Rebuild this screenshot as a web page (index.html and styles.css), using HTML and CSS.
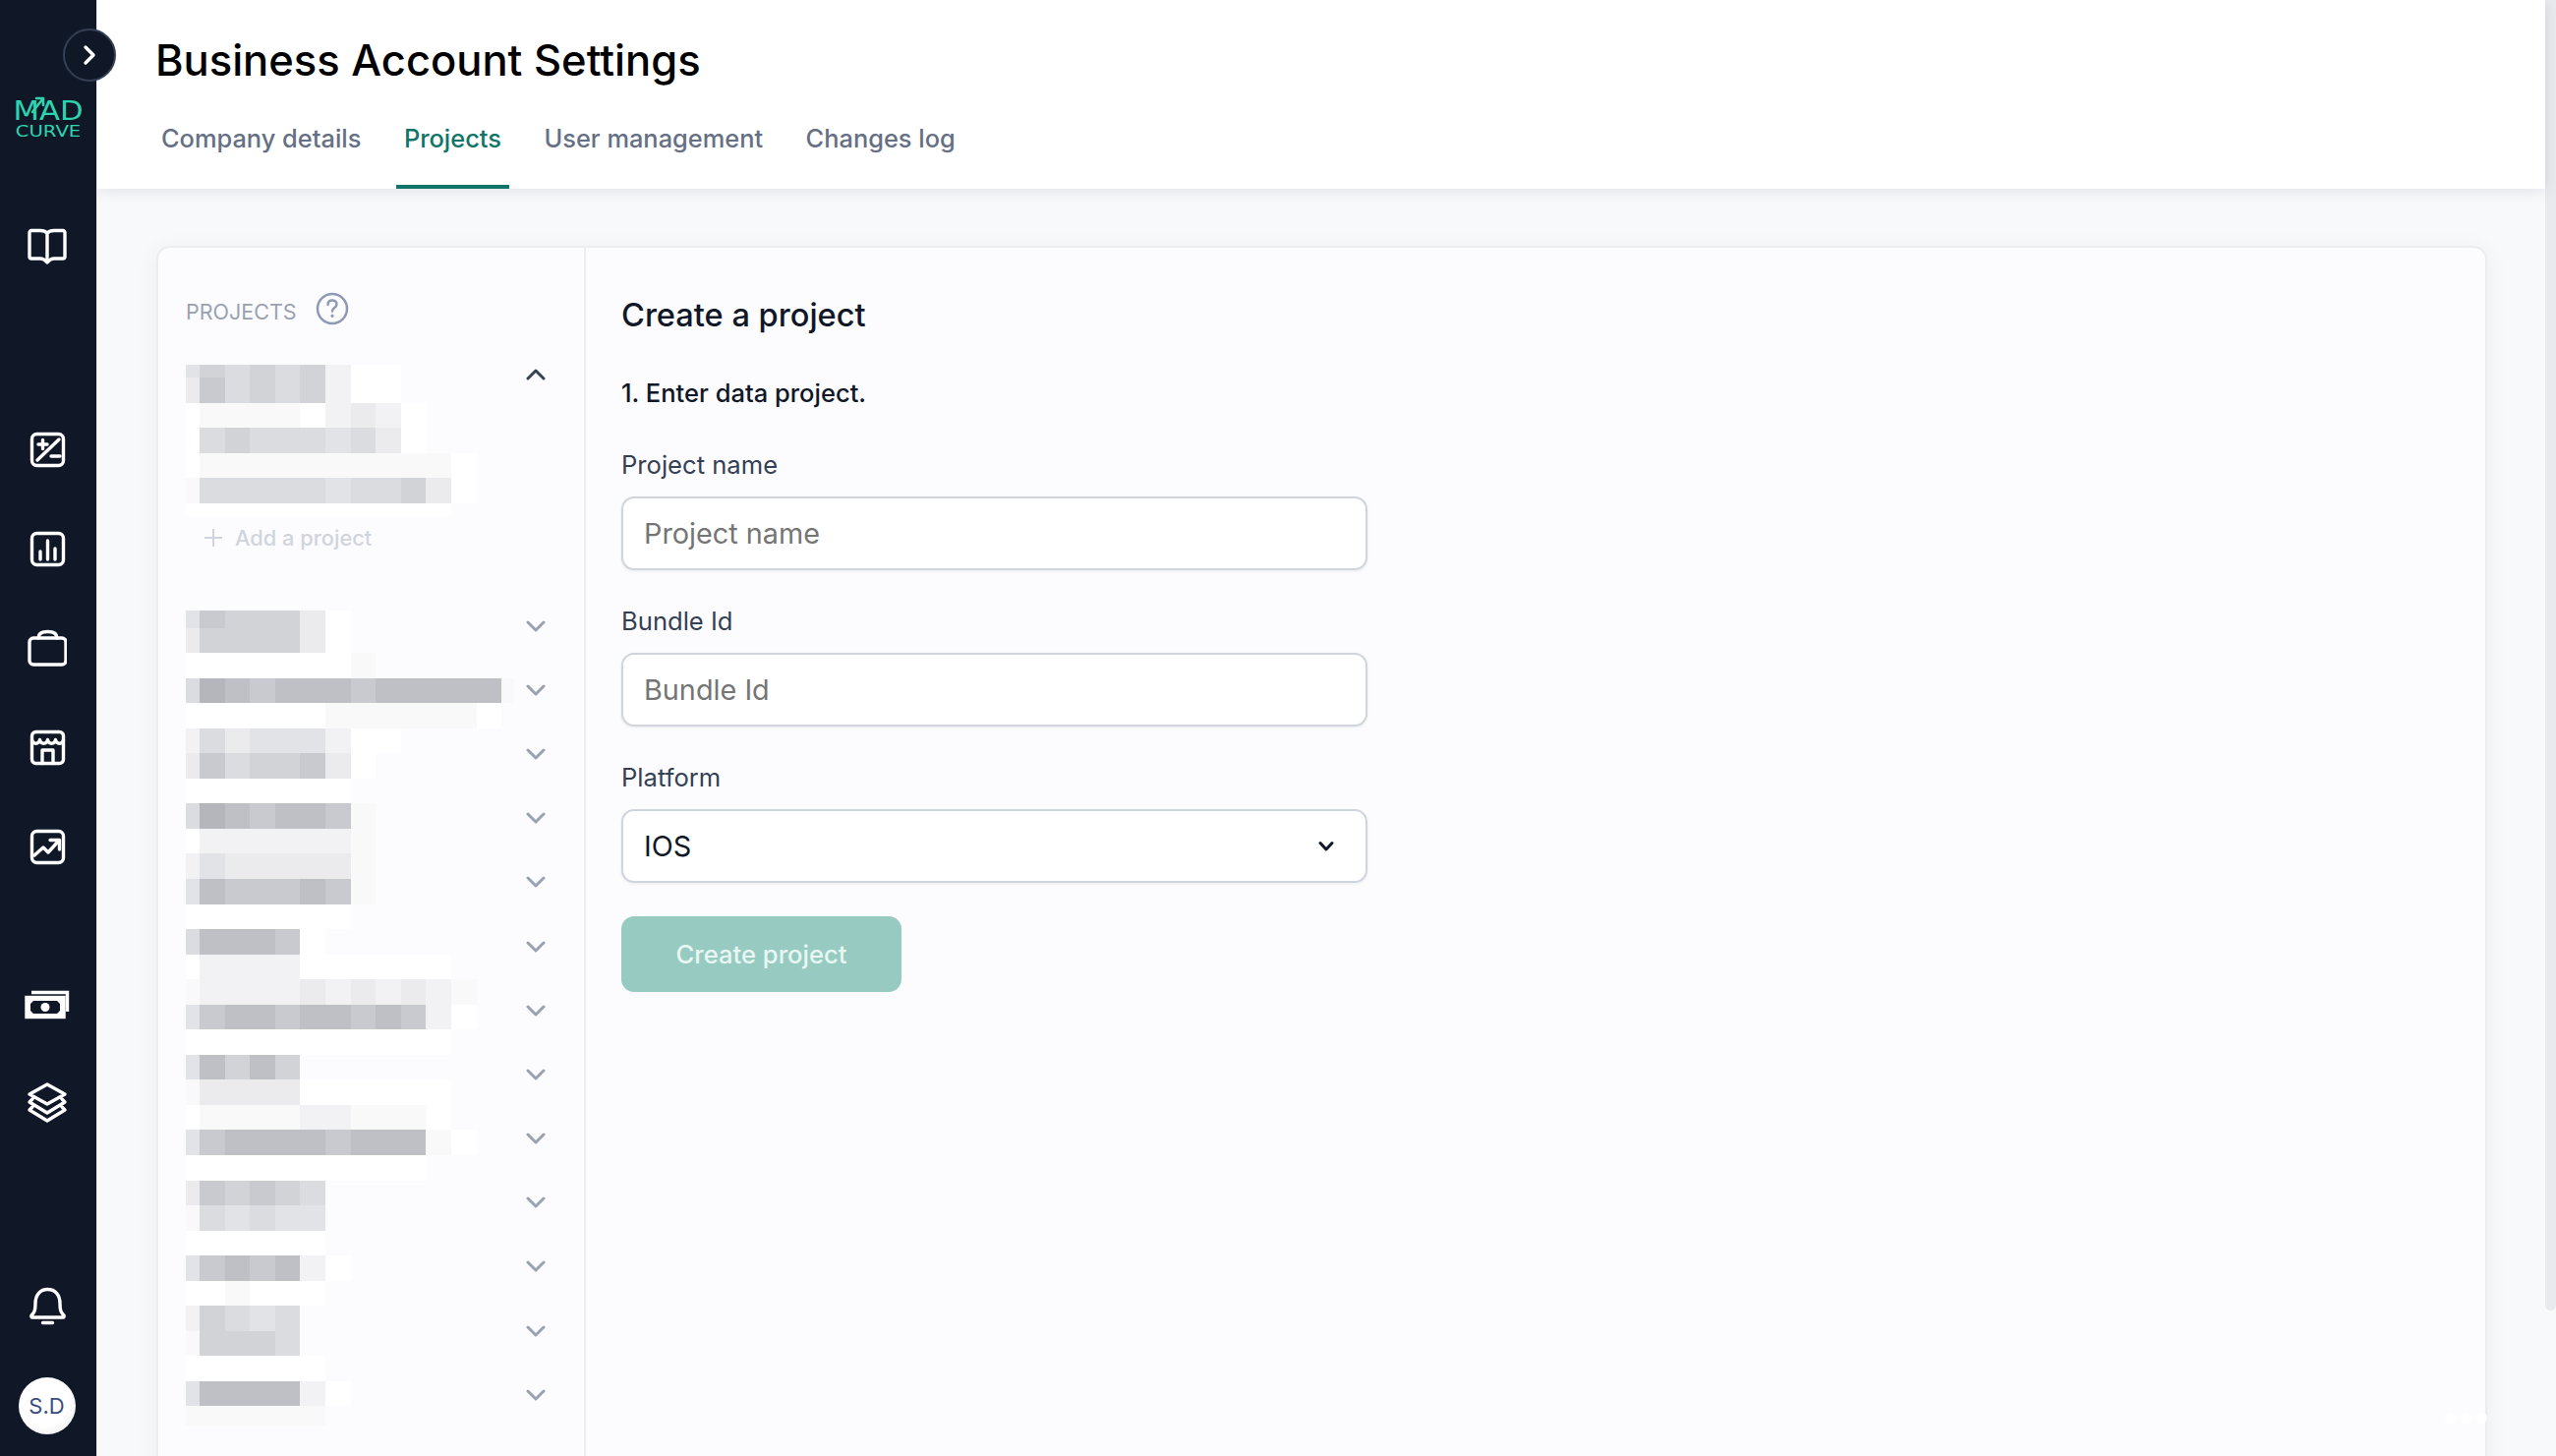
FILE: index.html
```html
<!DOCTYPE html>
<html lang="en">
<head>
  <meta charset="UTF-8">
  <meta name="viewport" content="width=device-width, initial-scale=1.0">
  <title>Business Account Settings</title>
  <link rel="stylesheet" href="styles.css">
</head>
<body>
  <aside class="sidebar">
    <button class="toggle">
      <svg width="14" height="22" viewBox="0 0 14 22"><path d="M3 3l8 8-8 8"/></svg>
    </button>
    <div class="logo">
      <svg class="logo-arrow" width="16" height="18" viewBox="0 0 16 18"><path d="M2 16L13 2M6 2h7v7"/></svg>
      <div class="logo-mad">MAD</div>
      <div class="logo-curve">CURVE</div>
    </div>

    <nav class="nav nav-top">
      <a class="nav-item">
        <svg width="40" height="40" viewBox="0 0 40 40"><path d="M20 7C18 5 16 4.500 13 4.500H4a2 2 0 0 0-2 2V31a2 2 0 0 0 2 2h9c3 0 5 1.500 7 4 2-2.500 4-4 7-4h9a2 2 0 0 0 2-2V6.500a2 2 0 0 0-2-2h-9C24 4.500 22 5 20 7zV37"/></svg>
      </a>
    </nav>

    <nav class="nav nav-reports">
      <a class="nav-item">
        <svg width="40" height="40" viewBox="0 0 40 40"><rect x="4.500" y="4.500" width="32" height="32" rx="5"/><path d="M10 31L32 10M11 15h9M15.500 10.500v9M24 27h9"/></svg>
      </a>
      <a class="nav-item">
        <svg width="40" height="40" viewBox="0 0 40 40"><rect x="4.500" y="4.500" width="32" height="32" rx="5"/><path d="M13 23v8M20.500 12v19M28 20v11"/></svg>
      </a>
      <a class="nav-item">
        <svg width="40" height="40" viewBox="0 0 40 40"><rect x="2" y="10" width="37" height="27" rx="4"/><path d="M11 10C11 5.500 14.500 3.500 20.500 3.500S30 5.500 30 10"/></svg>
      </a>
      <a class="nav-item">
        <svg width="40" height="40" viewBox="0 0 40 40"><rect x="4.500" y="4.500" width="32" height="32" rx="4"/><path d="M4.500 12.500c1 5 7 5 8 0 1 5 7 5 8 0 1 5 7 5 8 0 1 5 7 5 8 0M15 36.500V23h11v13.500"/></svg>
      </a>
      <a class="nav-item">
        <svg width="40" height="40" viewBox="0 0 40 40"><rect x="4.500" y="4.500" width="32" height="32" rx="5"/><path d="M7 29l9-8 5 5 11-12M23 13.500h9.500V23"/></svg>
      </a>
    </nav>

    <nav class="nav nav-money">
      <a class="nav-item">
        <svg width="46" height="30" viewBox="0 0 46 30"><path class="square" d="M7 2.500h36.500V22"/><rect class="square" x="2" y="7.500" width="38" height="20"/><path class="fill" d="M2 6h38v23H2zM9 11l-3 3v7l3 3h24l3-3v-7l-3-3z" fill-rule="evenodd"/><circle class="fill" cx="21" cy="17.500" r="4.500"/></svg>
      </a>
      <a class="nav-item">
        <svg width="42" height="42" viewBox="0 0 42 42"><path d="M21 2l18 10-18 10L3 12zM6 17l-3 3 18 11 18-11-3-3M6 25l-3 3 18 11 18-11-3-3"/></svg>
      </a>
    </nav>

    <div class="sidebar-foot">
      <a class="nav-item">
        <svg width="40" height="40" viewBox="0 0 40 40"><path d="M4 30c3-3 4-5 4-12C8 9 13 3.500 20.500 3.500S33 9 33 18c0 7 1 9 4 12 .5 1 0 2-1 2H5c-1 0-1.500-1-1-2zM15.500 37.500h10"/></svg>
      </a>
      <div class="avatar">S.D</div>
    </div>
  </aside>

  <main class="main">
    <header class="header">
      <h1>Business Account Settings</h1>
      <div class="tabs">
        <a class="tab">Company details</a>
        <a class="tab active">Projects</a>
        <a class="tab">User management</a>
        <a class="tab">Changes log</a>
      </div>
    </header>

    <div class="content">
      <section class="card">
        <div class="projects">
          <div class="projects-head">
            <span>PROJECTS</span>
            <svg width="34" height="34" viewBox="0 0 34 34"><circle cx="17" cy="17" r="15"/><path d="M12.500 13c0-3 2-4.500 4.500-4.500s4.500 1.500 4.500 4c0 3.500-4.500 3.500-4.500 7"/><path class="dot" d="M17 24v.5"/></svg>
          </div>

          <div class="project-group">
            <div class="mosaic mosaic-a" id="mosaic_a"></div>
            <div class="chevrons chevrons-open">
              <div class="chevron-slot open"><svg width="20" height="12" viewBox="0 0 20 12"><path d="M2 10l8-8 8 8"/></svg></div>
            </div>
          </div>

          <div class="add-project">
            <svg width="20" height="20" viewBox="0 0 20 20"><path d="M10 1v18M1 10h18"/></svg>
            <span>Add a project</span>
          </div>

          <div class="project-group">
            <div class="mosaic mosaic-b" id="mosaic_b"></div>
            <div class="chevrons" id="chevrons"></div>
          </div>
        </div>

        <form class="form">
          <h2>Create a project</h2>
          <p class="step">1. Enter data project.</p>
          <label class="field-label" for="project_name">Project name</label>
          <input class="field" id="project_name" type="text" placeholder="Project name">
          <label class="field-label" for="bundle_id">Bundle Id</label>
          <input class="field" id="bundle_id" type="text" placeholder="Bundle Id">
          <label class="field-label">Platform</label>
          <div class="field field-select">
            <span>IOS</span>
            <svg width="16" height="12" viewBox="0 0 16 12"><path d="M2 2.500l6 6.500 6-6.500"/></svg>
          </div>
          <button class="submit" type="button">Create project</button>
        </form>

        <div class="dots"><i></i><i></i><i></i></div>
      </section>
    </div>
  </main>

  <div class="scrollbar"><div class="scrollbar-thumb"></div></div>

  <script src="mosaic.js"></script>
</body>
</html>
```

FILE: styles.css
```css
* {
  box-sizing: border-box;
}
html, body {
  height: 100%;
}
body {
  margin: 0;
  display: flex;
  overflow: hidden;
  font-family: Inter, "Noto Sans", sans-serif;
  background: #f8f9fb;
  color: #101828;
}

/* sidebar */
.sidebar {
  position: relative;
  width: 99px;
  flex: none;
  display: flex;
  flex-direction: column;
  align-items: center;
  padding-right: 3px;
  background: #101828;
  border-right: 1px solid #e4e6ec;
  z-index: 3;
}
.sidebar svg {
  fill: none;
  stroke: #fff;
  stroke-width: 3.400;
  stroke-linecap: round;
  stroke-linejoin: round;
}
.toggle {
  position: absolute;
  left: 64px;
  top: 29px;
  width: 54px;
  height: 54px;
  display: flex;
  align-items: center;
  justify-content: center;
  padding: 0;
  border: 2px solid #344054;
  border-radius: 50%;
  background: #101828;
}
.logo {
  position: relative;
  width: 70px;
  margin-top: 100px;
  margin-left: 2px;
  height: 41px;
  color: #2dd4b0;
  text-align: center;
  font-family: "DejaVu Sans", sans-serif;
  line-height: 1;
}
.logo-mad {
  font-size: 26px;
  height: 26px;
  transform: scaleX(1.18);
}
.logo-curve {
  font-size: 16.500px;
  transform: scaleX(1.19);
}
.sidebar .logo-arrow {
  position: absolute;
  left: 17px;
  top: -2px;
  stroke: #2dd4b0;
  stroke-width: 2.500;
}
.nav {
  display: flex;
  flex-direction: column;
  align-items: center;
  gap: 61px;
}
.nav-top {
  margin-top: 89px;
}
.nav-reports {
  margin-top: 167px;
}
.nav-money {
  margin-top: 121px;
  gap: 60px;
}
.nav-item {
  display: flex;
  align-items: center;
  justify-content: center;
  height: 40px;
}
.sidebar .square {
  stroke-linecap: butt;
  stroke-linejoin: miter;
}
.sidebar .fill {
  fill: #fff;
  stroke: none;
}
.sidebar-foot {
  margin-top: auto;
  padding-bottom: 22px;
  display: flex;
  flex-direction: column;
  align-items: center;
  gap: 53px;
}
.avatar {
  width: 58px;
  height: 58px;
  display: flex;
  align-items: center;
  justify-content: center;
  border-radius: 50%;
  background: radial-gradient(circle at 40% 40%, #fff 55%, #e4e4e4 100%);
  color: #3b4d80;
  font-size: 22px;
}

/* header */
.main {
  flex: 1;
  min-width: 0;
  display: flex;
  flex-direction: column;
}
.header {
  height: 192px;
  flex: none;
  padding: 34px 0 0 59px;
  background: #fff;
  box-shadow: 0 2px 14px rgba(16, 24, 40, 0.1);
  position: relative;
  z-index: 2;
}
h1 {
  margin: 0;
  font-size: 43.500px;
  line-height: 54px;
  font-weight: 500;
  color: #000;
}
.tabs {
  display: flex;
  gap: 27.500px;
  margin-top: 25px;
  margin-left: -2px;
}
.tab {
  height: 79px;
  padding: 10px 8px 0;
  font-size: 25.400px;
  line-height: 36px;
  font-weight: 500;
  color: #667085;
}
.tab.active {
  color: #107569;
  border-bottom: 4px solid #107569;
}

/* card */
.content {
  flex: 1;
  min-height: 0;
  padding: 58px 59px 0 60px;
}
.card {
  position: relative;
  display: flex;
  min-height: 1300px;
  background: #fcfcfe;
  border: 2px solid #ebedf0;
  border-radius: 14px;
  box-shadow: 0 4px 24px rgba(16, 24, 40, 0.05);
}
.projects {
  width: 435px;
  flex: none;
  padding: 46px 39px 0 28px;
  border-right: 2px solid #eceef1;
}
.projects-head {
  display: flex;
  align-items: center;
  gap: 19px;
  height: 34px;
  font-size: 21.500px;
  color: #98a2b3;
}
.projects-head span {
  padding-top: 3px;
}
.projects-head svg {
  margin-top: -3px;
  fill: none;
  stroke: #8d9ab3;
  stroke-width: 2.500;
  stroke-linecap: round;
}
.projects-head .dot {
  stroke-width: 3;
}
.project-group {
  display: flex;
  justify-content: space-between;
  margin-top: 39px;
}
.add-project + .project-group {
  margin-top: 61px;
}
.mosaic {
  display: grid;
  grid-template-columns: 14px repeat(12, 25.600px) 13px;
  width: 334px;
}
.mosaic-a {
  grid-template-rows: 13px repeat(5, 25.500px) 14px;
}
.mosaic-b {
  grid-template-rows: 18px repeat(31, 25.550px) 20px;
}
.chevrons {
  margin-top: -16.500px;
}
.chevrons-open {
  margin-top: -23px;
}
.chevron-slot {
  height: 65.200px;
  width: 20px;
  display: flex;
  align-items: center;
}
.chevron-slot svg {
  fill: none;
  stroke: #98a2b3;
  stroke-width: 3;
  stroke-linecap: round;
  stroke-linejoin: round;
}
.chevron-slot.open svg {
  stroke: #344054;
}
.add-project {
  display: flex;
  align-items: center;
  gap: 12px;
  height: 26px;
  margin-top: 8px;
  margin-left: 18px;
  font-size: 21.800px;
  font-weight: 500;
  color: #d0d5dd;
}
.add-project svg {
  stroke: #d0d5dd;
  stroke-width: 2;
}

/* form */
.form {
  flex: 1;
  padding: 46px 0 0 36px;
  display: flex;
  flex-direction: column;
  align-items: flex-start;
}
h2 {
  margin: 0;
  font-size: 32.600px;
  line-height: 44px;
  font-weight: 500;
  color: #101828;
}
.step {
  margin: 40px 0 0;
  font-size: 25.500px;
  line-height: 36px;
  font-weight: 500;
}
.field-label {
  margin-top: 36px;
  font-size: 25.600px;
  line-height: 36px;
  color: #344054;
}
.step + .field-label {
  margin-top: 37px;
}
.field {
  width: 759px;
  height: 75px;
  margin-top: 14px;
  margin-bottom: -2px;
  padding: 0 21px;
  border: 2px solid #d0d5dd;
  border-radius: 13px;
  background: #fff;
  box-shadow: 0 1px 3px rgba(16, 24, 40, 0.08);
  font-family: inherit;
  font-size: 28.800px;
  color: #101828;
}
.field::placeholder {
  color: #757575;
  opacity: 1;
}
.field-select {
  display: flex;
  align-items: center;
  justify-content: space-between;
  padding-right: 32px;
}
.field-select svg {
  fill: none;
  stroke: #101828;
  stroke-width: 3;
  stroke-linecap: round;
  stroke-linejoin: round;
}
.submit {
  width: 285px;
  height: 77px;
  margin-top: 36px;
  border: none;
  border-radius: 13px;
  background: #97cbc1;
  color: #e8f7f3;
  font-family: inherit;
  font-size: 25.600px;
  font-weight: 500;
}
.dots {
  position: absolute;
  right: -2px;
  bottom: 100px;
  display: flex;
  gap: 5px;
}
.dots i {
  width: 11px;
  height: 11px;
  border-radius: 50%;
  background: #fff;
}

/* scrollbar */
.scrollbar {
  width: 11px;
  flex: none;
}
.scrollbar-thumb {
  height: 1333px;
  background: #e9eaee;
  border-bottom-left-radius: 8px;
  border-bottom-right-radius: 8px;
}
```

FILE: mosaic.js
```js
// blurred project names, one digit per square, 0 = nothing, 1 = white ... a = darkest
const tons = {
  "1": "#ffffff", "2": "#f9f9fa", "3": "#f2f2f4", "4": "#ebebee", "5": "#e2e3e6",
  "6": "#dbdce0", "7": "#d2d3d7", "8": "#c9cacf", "9": "#bfc0c5", "a": "#b5b6bb"
};

const nomesA = [
  "57676731100000",
  "48676731100000",
  "12222134310000",
  "16766656410000",
  "12222222222100",
  "26666656674100",
  "11111111111000"
];

const nomesB = [
  "58777410000000",
  "47777410000000",
  "11111112000000",
  "6a989998999992",
  "11111122222210",
  "36455531100000",
  "48677841000000",
  "11111110000000",
  "6a989982000000",
  "13333332000000",
  "35444442000000",
  "59888982000000",
  "11111110000000",
  "69998100000000",
  "13333111111000",
  "23333434343200",
  "58998998983100",
  "11111111111000",
  "59797000000000",
  "24444111111000",
  "12222332221000",
  "58999989992100",
  "11111111110000",
  "48787600000000",
  "26565500000000",
  "11111100000000",
  "58989310000000",
  "11211100000000",
  "37656000000000",
  "27776000000000",
  "11111100000000",
  "59999310000000",
  "22222200000000"
];

function desenharMosaico(id, linhas) {
  const caixa = document.getElementById(id);
  linhas.forEach(linha => {
    linha.split("").forEach(c => {
      const q = document.createElement("span");
      if (tons[c]) q.style.background = tons[c];
      caixa.appendChild(q);
    });
  });
}

desenharMosaico("mosaic_a", nomesA);
desenharMosaico("mosaic_b", nomesB);

const chevrons = document.getElementById("chevrons");
for (let i = 0; i < 13; i++) {
  const slot = document.createElement("div");
  slot.className = "chevron-slot";
  slot.innerHTML = '<svg width="20" height="12" viewBox="0 0 20 12"><path d="M2 2l8 8 8-8"/></svg>';
  chevrons.appendChild(slot);
}
```
